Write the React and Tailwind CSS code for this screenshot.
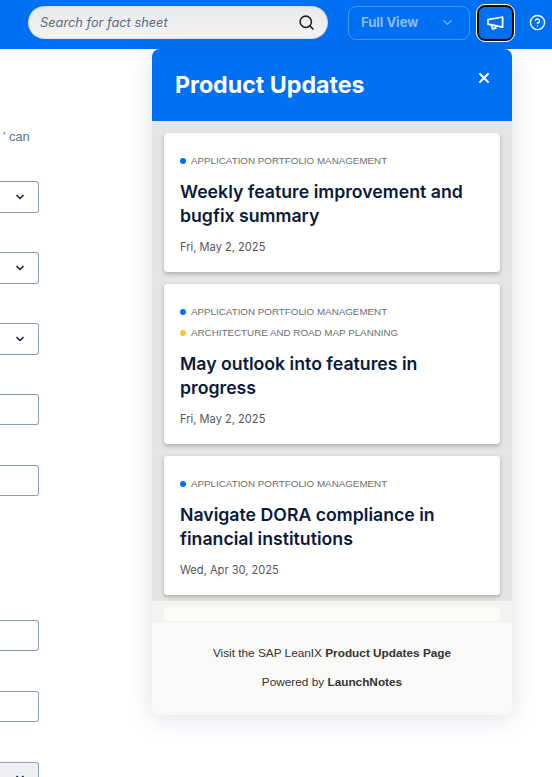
import React from 'react';
import { Search, ChevronDown, CircleHelp, X } from 'lucide-react';

const POSTS = [
  {
    tags: [{ label: 'APPLICATION PORTFOLIO MANAGEMENT', dot: 'bg-[#0070f2]' }],
    title: ['Weekly feature improvement and', 'bugfix summary'],
    date: 'Fri, May 2, 2025',
  },
  {
    tags: [
      { label: 'APPLICATION PORTFOLIO MANAGEMENT', dot: 'bg-[#0070f2]' },
      { label: 'ARCHITECTURE AND ROAD MAP PLANNING', dot: 'bg-[#fdc82f]' },
    ],
    title: ['May outlook into features in', 'progress'],
    date: 'Fri, May 2, 2025',
  },
  {
    tags: [{ label: 'APPLICATION PORTFOLIO MANAGEMENT', dot: 'bg-[#0070f2]' }],
    title: ['Navigate DORA compliance in', 'financial institutions'],
    date: 'Wed, Apr 30, 2025',
  },
];

function MegaphoneIcon() {
  return (
    <svg width="17" height="14" viewBox="0 0 17 14" fill="none" stroke="currentColor" strokeWidth="1.7" strokeLinejoin="round" strokeLinecap="round">
      <path d="M1 3.6 L15.6 1 V11.2 L1 8.2 Z" />
      <path d="M4.4 8.8 L5.6 12.8 L8.8 12.2 L8.2 9.6" />
    </svg>
  );
}

function SelectStub({ grey }) {
  return (
    <div className={`flex h-[32px] w-[39px] items-center justify-end rounded-r-[3px] border border-l-0 border-[#8b9dbd] pr-[12px] ${grey ? 'bg-[#eef0f4]' : 'bg-white'}`}>
      <ChevronDown size={12} strokeWidth={3.5} className="text-[#1d2d4a]" />
    </div>
  );
}

function InputStub() {
  return <div className="h-[31px] w-[39px] rounded-r-[3px] border border-l-0 border-[#8b9dbd] bg-white" />;
}

function PostCard({ post }) {
  return (
    <div className="rounded-[4px] bg-white px-[16px] pt-[20px] pb-[17px] shadow-[0_2px_4px_rgba(0,0,0,0.25)]">
      <div className="flex flex-col gap-[5px]">
        {post.tags.map((tag) => (
          <div key={tag.label} className="flex h-[16px] items-center gap-[5px]">
            <span className={`h-[6px] w-[6px] rounded-full ${tag.dot}`} />
            <span className="font-['Liberation_Sans',sans-serif] text-[9.8px] text-[#6d6d6d]">{tag.label}</span>
          </div>
        ))}
      </div>
      <h3 className="mt-[11px] text-[17.7px] leading-[24px] font-semibold text-[#0a1a3a]">
        {post.title.map((line) => (
          <div key={line}>{line}</div>
        ))}
      </h3>
      <div className="mt-[11px] text-[11.1px] leading-[16px] text-[#555]">{post.date}</div>
    </div>
  );
}

export default function App() {
  return (
    <div className="relative h-[777px] w-[552px] overflow-hidden bg-white font-['Inter',sans-serif]">
      <header className="flex h-[49px] items-center bg-[#0070f2] pb-[4px] pl-[28px]">
        <div className="flex h-[33px] w-[300px] items-center justify-between rounded-full bg-gradient-to-b from-[#e8e9eb] to-[#f3f4f6] pr-[13px] pl-[12px] shadow-[inset_0_0_2px_rgba(0,0,0,0.3)]">
          <span className="text-[12.8px] text-[#5b6b80] italic">Search for fact sheet</span>
          <Search size={17} strokeWidth={2.2} className="text-[#1c1c1c]" />
        </div>
        <div className="ml-[20px] flex h-[34px] w-[122px] items-center justify-between rounded-[8px] border border-[#4a95f5] pr-[14px] pl-[12px] text-[#8ebcf8]">
          <span className="text-[13px] font-bold">Full View</span>
          <ChevronDown size={15} strokeWidth={2} />
        </div>
        <div className="ml-[7px] flex h-[36px] w-[37px] items-center justify-center rounded-[8px] border-2 border-[#111] text-white outline outline-1 outline-white">
          <MegaphoneIcon />
        </div>
        <CircleHelp size={17} strokeWidth={2} className="ml-[15px] text-white" />
      </header>

      <main className="flex flex-col items-start">
        <p className="mt-[78px] ml-[3px] h-[20px] font-['Liberation_Sans',sans-serif] text-[12.8px] leading-[20px] text-[#5b7089]">' can</p>
        <div className="mt-[34px] flex flex-col gap-[39px]">
          <SelectStub />
          <SelectStub />
          <SelectStub />
        </div>
        <div className="mt-[39px] flex flex-col gap-[40px]">
          <InputStub />
          <InputStub />
        </div>
        <div className="mt-[124px] flex flex-col gap-[40px]">
          <InputStub />
          <InputStub />
        </div>
        <div className="mt-[40px]">
          <SelectStub grey />
        </div>
      </main>

      <aside className="absolute top-[49px] left-[152px] flex h-[666px] w-[360px] flex-col overflow-hidden rounded-[8px] bg-[#f9f9f7] shadow-[0_4px_24px_rgba(30,50,90,0.14)]">
        <div className="flex h-[72px] shrink-0 items-start justify-between bg-[#0070f2] pr-[20px] pl-[23px]">
          <h2 className="mt-[20px] text-[23.2px] leading-[32px] font-bold text-white">Product Updates</h2>
          <X size={16} strokeWidth={3} className="mt-[21px] text-white" />
        </div>
        <div className="relative flex h-[500px] shrink-0 flex-col gap-[12px] overflow-hidden bg-[#e5e5e3] px-[12px] pt-[12px]">
          {POSTS.map((post) => (
            <PostCard key={post.title[0]} post={post} />
          ))}
          <div className="h-[40px] shrink-0 rounded-[4px] bg-white" />
          <div className="absolute right-0 bottom-0 left-0 h-[20px] bg-[#f9f9f7]/70" />
        </div>
        <footer className="flex flex-1 flex-col items-center border-t border-[#efefec] pt-[23px] font-['Liberation_Sans',sans-serif] text-[11.8px] leading-[16px] text-[#333]">
          <p>
            Visit the SAP LeanIX <b>Product Updates Page</b>
          </p>
          <p className="mt-[13px]">
            Powered by <b>LaunchNotes</b>
          </p>
        </footer>
      </aside>
    </div>
  );
}
